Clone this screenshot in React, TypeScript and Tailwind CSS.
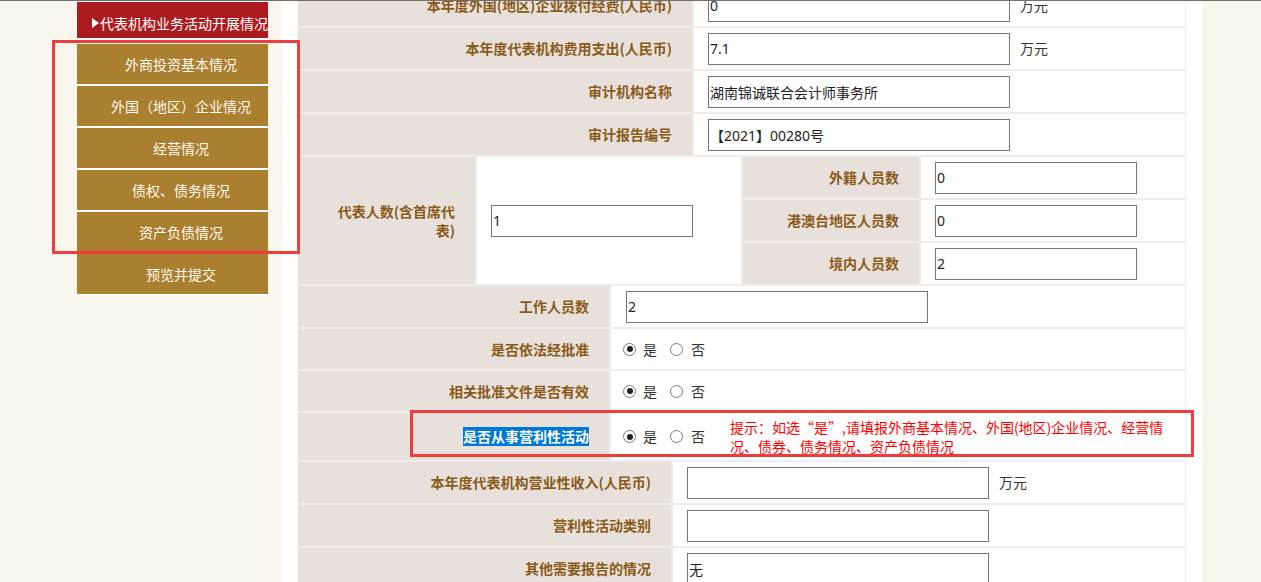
import React from "react";

const LABEL =
  "flex items-center justify-end bg-[#e8e1db] pr-[20px] text-[14px] font-bold text-[#8a5a19]";
const VALUE = "flex items-center bg-white pl-[14px]";

function Field({ v = "", narrow }: { v?: string; narrow?: boolean }) {
  return (
    <input
      readOnly
      value={v}
      className={
        (narrow ? "w-[202px] " : "w-[302px] ") +
        "h-[32px] border border-[#767676] bg-white px-[1px] text-[14px] text-[#222] outline-none font-['Noto_Sans','Noto_Sans_CJK_SC',sans-serif]"
      }
    />
  );
}

function Unit() {
  return <span className="ml-[10px] text-[14px] text-[#333]">万元</span>;
}

function Radio({ checked }: { checked?: boolean }) {
  return (
    <span className="inline-flex h-[13px] w-[13px] items-center justify-center rounded-full border border-[#7a7a7a] bg-white">
      {checked ? <span className="h-[6px] w-[6px] rounded-full bg-[#222]" /> : null}
    </span>
  );
}

function YesNo() {
  return (
    <div className="flex items-center text-[14px] text-[#333]">
      <Radio checked />
      <span className="ml-[7px]">是</span>
      <span className="ml-[13px] flex">
        <Radio />
      </span>
      <span className="ml-[8px]">否</span>
    </div>
  );
}

const menu = [
  "外商投资基本情况",
  "外国（地区）企业情况",
  "经营情况",
  "债权、债务情况",
  "资产负债情况",
  "预览并提交",
];

export default function App() {
  return (
    <div className="relative h-[582px] w-[1261px] overflow-hidden bg-[#f9f6ee] font-['Noto_Sans_CJK_SC',sans-serif]">
      <div className="h-px w-full bg-[#707070]" />
      <div className="flex items-start">
        {/* Sidebar */}
        <aside className="ml-[77px] w-[191px] rounded-b-[2px] bg-white pt-px pb-[2px]">
          <div className="flex h-[36px] items-center whitespace-nowrap bg-[#ac1b1f] pl-[15px] pt-[6px] text-[14px] text-white">
            <svg width="7" height="10" viewBox="0 0 7 10" className="mr-px">
              <polygon points="0,0 7,5 0,10" fill="#ffffff" />
            </svg>
            <span>代表机构业务活动开展情况</span>
          </div>
          <div className="mt-[6px] flex flex-col gap-[2px]">
            {menu.map((m) => (
              <div
                key={m}
                className="flex h-[40px] items-center justify-center bg-[#aa7f2f] pl-[17px] text-[14px] text-[#fffaf0]"
              >
                {m}
              </div>
            ))}
          </div>
        </aside>

        {/* Main */}
        <main className="ml-[14px] h-[581px] w-[920px] overflow-hidden bg-white px-[16px]">
          <div className="-mt-[16px] flex flex-col gap-[2px] bg-[#ededed] pr-px">
            {/* Table A */}
            <div className="grid grid-cols-[394px_1fr] auto-rows-[41px] gap-[2px]">
              <div className={LABEL}>本年度外国(地区)企业拨付经费(人民币)</div>
              <div className={VALUE}>
                <Field v="0" />
                <Unit />
              </div>
              <div className={LABEL}>本年度代表机构费用支出(人民币)</div>
              <div className={VALUE}>
                <Field v="7.1" />
                <Unit />
              </div>
              <div className={LABEL}>审计机构名称</div>
              <div className={VALUE}>
                <Field v="湖南锦诚联合会计师事务所" />
              </div>
              <div className={LABEL}>审计报告编号</div>
              <div className={VALUE}>
                <Field v="【2021】00280号" />
              </div>
            </div>

            {/* Table B */}
            <div className="grid grid-cols-[177px_264px_176px_1fr] grid-rows-[41px_41px_41px] gap-[2px]">
              <div className={LABEL + " row-span-3"}>
                <span className="text-right leading-[19px]">
                  代表人数(含首席代
                  <br />
                  表)
                </span>
              </div>
              <div className={VALUE + " row-span-3"}>
                <Field v="1" narrow />
              </div>
              <div className={LABEL}>外籍人员数</div>
              <div className={VALUE}>
                <Field v="0" narrow />
              </div>
              <div className={LABEL}>港澳台地区人员数</div>
              <div className={VALUE}>
                <Field v="0" narrow />
              </div>
              <div className={LABEL}>境内人员数</div>
              <div className={VALUE}>
                <Field v="2" narrow />
              </div>
            </div>

            {/* Table C */}
            <div className="grid grid-cols-[311px_1fr] grid-rows-[41px_40px_40px_47px] gap-[2px]">
              <div className={LABEL}>工作人员数</div>
              <div className={VALUE + " pl-[15px]"}>
                <Field v="2" />
              </div>
              <div className={LABEL}>是否依法经批准</div>
              <div className="flex items-center bg-white pl-[12px]">
                <YesNo />
              </div>
              <div className={LABEL}>相关批准文件是否有效</div>
              <div className="flex items-center bg-white pl-[12px]">
                <YesNo />
              </div>
              <div className={LABEL}>
                <span className="bg-[#0078d7] leading-[19px] text-white">是否从事营利性活动</span>
              </div>
              <div className="flex items-center bg-white pl-[12px]">
                <YesNo />
                <div className="ml-[25px] text-[14px] leading-[19px] text-[#ff0000]">
                  提示：如选“是”,请填报外商基本情况、外国(地区)企业情况、经营情
                  <br />
                  况、债券、债务情况、资产负债情况
                </div>
              </div>
            </div>

            {/* Table D */}
            <div className="grid grid-cols-[373px_1fr] auto-rows-[41px] gap-[2px]">
              <div className={LABEL}>本年度代表机构营业性收入(人民币)</div>
              <div className={VALUE}>
                <Field />
                <Unit />
              </div>
              <div className={LABEL}>营利性活动类别</div>
              <div className={VALUE}>
                <Field />
              </div>
              <div className={LABEL}>其他需要报告的情况</div>
              <div className={VALUE}>
                <Field v="无" />
              </div>
            </div>
          </div>
        </main>
      </div>

      {/* Red annotation boxes */}
      <div className="pointer-events-none absolute left-[52px] top-[40px] h-[214px] w-[248px] border-[3px] border-[#f03c3c]" />
      <div className="pointer-events-none absolute left-[410px] top-[410px] h-[47px] w-[784px] border-[3px] border-[#f03c3c]" />
    </div>
  );
}
